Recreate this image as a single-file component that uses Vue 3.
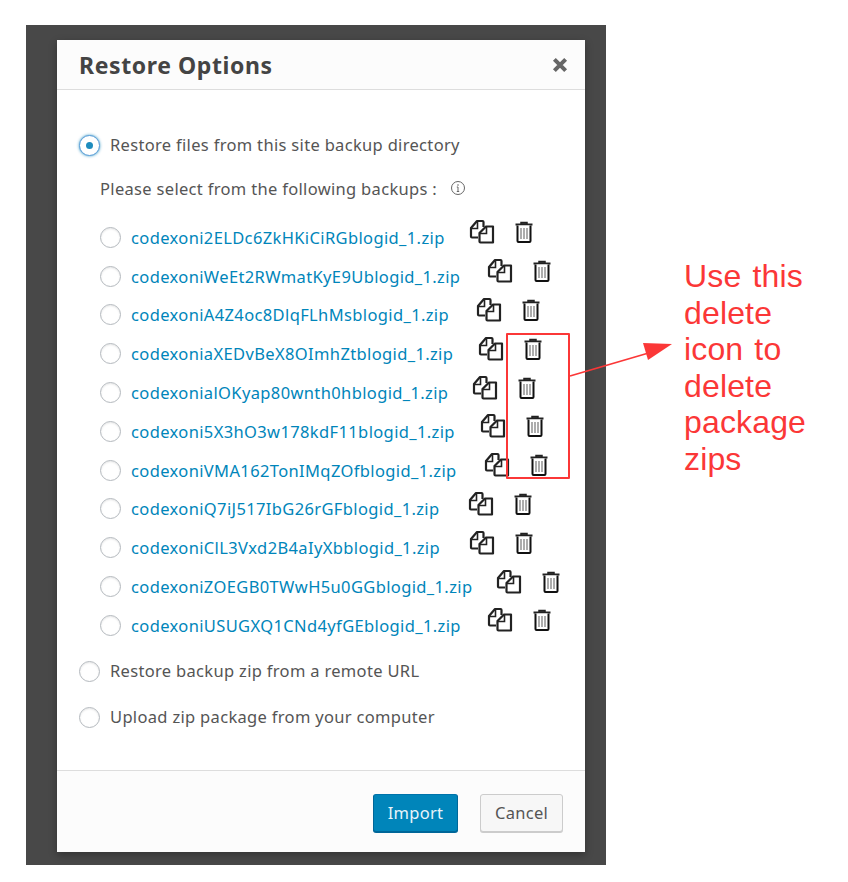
<script setup>
const backups = [
  { name: 'codexoni2ELDc6ZkHKiCiRGblogid_1.zip', width: 313 },
  { name: 'codexoniWeEt2RWmatKyE9Ublogid_1.zip', width: 331 },
  { name: 'codexoniA4Z4oc8DlqFLhMsblogid_1.zip', width: 320 },
  { name: 'codexoniaXEDvBeX8OImhZtblogid_1.zip', width: 322 },
  { name: 'codexonialOKyap80wnth0hblogid_1.zip', width: 316 },
  { name: 'codexoni5X3hO3w178kdF11blogid_1.zip', width: 324 },
  { name: 'codexoniVMA162TonIMqZOfblogid_1.zip', width: 328 },
  { name: 'codexoniQ7iJ517IbG26rGFblogid_1.zip', width: 312 },
  { name: 'codexoniClL3Vxd2B4aIyXbblogid_1.zip', width: 313 },
  { name: 'codexoniZOEGB0TWwH5u0GGblogid_1.zip', width: 340 },
  { name: 'codexoniUSUGXQ1CNd4yfGEblogid_1.zip', width: 331 }
]
const note = ['Use this', 'delete', 'icon to', 'delete', 'package', 'zips']
</script>

<template>
  <div class="page">
    <div class="panel">
      <div class="modal">
        <header class="head">
          <h1>Restore Options</h1>
          <svg class="close" width="18" height="18" viewBox="0 0 16 16"><path d="M3 3l10 10M13 3L3 13" stroke="#666" stroke-width="3.6" /></svg>
        </header>
        <main class="body">
          <label class="option first"><span class="radio on"></span><span class="lbl">Restore files from this site backup directory</span></label>
          <div class="prompt">
            Please select from the following backups :
            <svg width="16" height="16" viewBox="0 0 16 16"><circle cx="8" cy="8" r="6.5" fill="none" stroke="#666" stroke-width="1"/><path d="M8 7v4.500M6.800 11.500h2.400M6.800 7H8" stroke="#666" stroke-width="1" fill="none"/><circle cx="8" cy="5" r=".8" fill="#666"/></svg>
          </div>
          <ul class="list">
            <li v-for="b in backups" :key="b.name" class="row">
              <span class="radio"></span>
              <a class="link" :style="{ width: b.width + 'px' }">{{ b.name }}</a>
              <svg class="copy" width="26" height="25" viewBox="0 0 26 25">
                <path d="M9 18.500H3a1 1 0 0 1-1-1V9L8 2h5.500a1 1 0 0 1 1 1V8" fill="#fff" stroke="#222" stroke-width="2.200" stroke-linejoin="round"/>
                <path d="M3 9.500h5.500V3" fill="none" stroke="#222" stroke-width="1.600"/>
                <path d="M10.500 22.500V14L17 7.500H24V23.500H11.500a1 1 0 0 1-1-1Z" fill="#fff" stroke="#222" stroke-width="2.200" stroke-linejoin="round"/>
                <path d="M11 14.500h6.500V8" fill="none" stroke="#222" stroke-width="1.600"/>
              </svg>
              <svg class="trash" width="20" height="22" viewBox="0 0 20 22">
                <path d="M7 3V1.500h6V3" fill="#444" stroke="#222" stroke-width="1.500"/>
                <path d="M1.500 3.500h17" stroke="#222" stroke-width="2"/>
                <path d="M3.500 4.500V20a1 1 0 0 0 1 1h11a1 1 0 0 0 1-1V4.500" fill="#fff" stroke="#111" stroke-width="2"/>
                <path d="M7 7v11M10 7v11M13 7v11" stroke="#999" stroke-width="1.600"/>
              </svg>
            </li>
          </ul>
          <label class="option remote"><span class="radio"></span><span class="lbl">Restore backup zip from a remote URL</span></label>
          <label class="option upload"><span class="radio"></span><span class="lbl">Upload zip package from your computer</span></label>
        </main>
        <footer class="foot">
          <button class="btn primary">Import</button>
          <button class="btn">Cancel</button>
        </footer>
      </div>
    </div>

    <div class="box"></div>
    <svg class="arrow" width="110" height="40" viewBox="0 0 110 40">
      <path d="M2 34L84 10" stroke="#fb3737" stroke-width="1.800"/>
      <path d="M104 2L75 1L80 18Z" fill="#fb3737"/>
    </svg>
    <div class="note"><div v-for="(line, i) in note" :key="i">{{ line }}</div></div>
  </div>
</template>

<style>
html, body { margin: 0; background: #fff; }
</style>

<style scoped>
.page {
  position: relative;
  width: 848px;
  height: 882px;
  padding: 25px 0 0 26px;
  box-sizing: border-box;
  font-family: "Noto Sans", "Open Sans", sans-serif;
  overflow: hidden;
}
.panel {
  width: 580px;
  height: 840px;
  padding: 15px 0 0 31px;
  box-sizing: border-box;
  background: #484848;
}
.modal {
  width: 528px;
  height: 812px;
  background: #fff;
  display: flex;
  flex-direction: column;
  box-shadow: 0 3px 8px rgba(0, 0, 0, .3);
}
.head {
  height: 50px;
  flex: none;
  box-sizing: border-box;
  border-bottom: 1px solid #ddd;
  background: #fcfcfc;
  display: flex;
  align-items: center;
  justify-content: space-between;
  padding: 0 16px 0 22px;
}
h1 {
  margin: 0;
  font-size: 23px;
  font-weight: 700;
  color: #444;
  letter-spacing: .6px;
}
.body {
  flex: 1;
  padding: 0 0 0 22px;
  color: #555;
  font-size: 16.500px;
  letter-spacing: .32px;
  position: relative;
}
.option {
  display: flex;
  align-items: center;
  gap: 10px;
  height: 24px;
}
.lbl { margin-top: -2px; }
.first { margin-top: 43px; }
.prompt {
  display: flex;
  align-items: center;
  gap: 13px;
  height: 24px;
  margin: 19px 0 0 21px;
}
.list {
  list-style: none;
  margin: 18px 0 0 21px;
  padding: 0;
}
.row {
  display: flex;
  align-items: center;
  height: 38.800px;
}
.radio {
  flex: none;
  width: 21px;
  height: 21px;
  box-sizing: border-box;
  border: 1px solid #b4b9be;
  border-radius: 50%;
  background: #fff;
  box-shadow: inset 0 1px 2px rgba(0, 0, 0, .1);
  display: inline-flex;
  align-items: center;
  justify-content: center;
}
.radio.on {
  border-color: #5b9dd9;
  box-shadow: 0 0 3px rgba(30, 140, 190, .9);
}
.radio.on::before {
  content: "";
  width: 7px;
  height: 7px;
  border-radius: 50%;
  background: #1e8cbe;
}
.link {
  flex: none;
  margin-left: 10px;
  color: #0085ba;
  white-space: nowrap;
  letter-spacing: .37px;
}
.copy { margin: -11px 0 0 25px; flex: none; }
.trash { margin: -10px 0 0 19px; flex: none; }
.remote { margin-top: 15px; }
.upload { margin-top: 22px; }
.foot {
  height: 82px;
  flex: none;
  box-sizing: border-box;
  border-top: 1px solid #ddd;
  background: #fcfcfc;
  display: flex;
  justify-content: flex-end;
  align-items: flex-start;
  gap: 22px;
  padding: 23px 22px 0 0;
}
.btn {
  height: 38px;
  padding: 0 0 2px;
  width: 83px;
  font: 16.500px "Noto Sans", "Open Sans", sans-serif;
  letter-spacing: .3px;
  color: #555;
  background: #f7f7f7;
  border: 1px solid #ccc;
  border-radius: 3px;
  box-shadow: 0 1px 0 #ccc;
}
.btn.primary {
  width: 85px;
  color: #e8f4fa;
  background: #0085ba;
  border-color: #0073aa #006799 #006799;
  box-shadow: 0 1px 0 #006799;
}
.box {
  position: absolute;
  left: 506px;
  top: 333px;
  width: 64px;
  height: 146px;
  box-sizing: border-box;
  border: 2px solid #fb3737;
  border-radius: 1px;
}
.arrow {
  position: absolute;
  left: 568px;
  top: 342px;
}
.note {
  position: absolute;
  left: 684px;
  top: 258px;
  font: 32px/36.600px "Liberation Sans", Arial, sans-serif;
  letter-spacing: .15px;
  word-spacing: 2px;
  color: #fb3737;
}
</style>
